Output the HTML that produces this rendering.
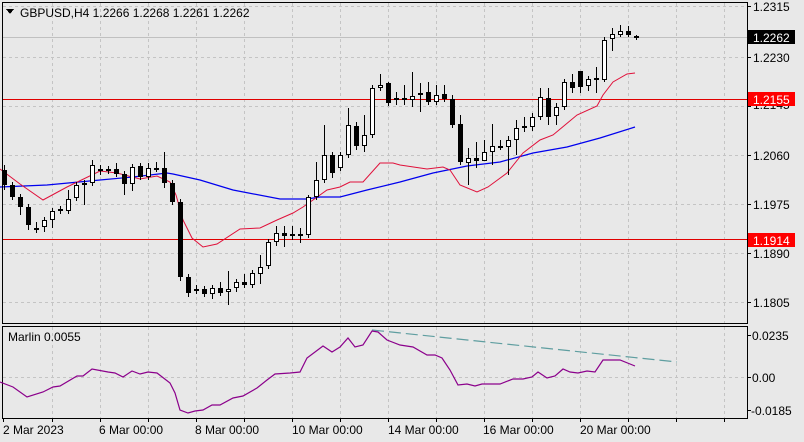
<!DOCTYPE html>
<html><head><meta charset="utf-8">
<style>
html,body{margin:0;padding:0;background:#e8e8e8;width:804px;height:442px;overflow:hidden}
svg{display:block}
text{font-family:"Liberation Sans",sans-serif;font-size:12px;fill:#000}
</style></head><body>
<svg id="s" width="804" height="442" viewBox="0 0 804 442" xmlns="http://www.w3.org/2000/svg" shape-rendering="crispEdges">
<rect x="0" y="0" width="804" height="442" fill="#e8e8e8"/>
<g id="grid" stroke="#c4c4c4" stroke-dasharray="3,3" stroke-width="1"></g>
<line x1="2" y1="37.5" x2="747" y2="37.5" stroke="#c0c0c0"/>
<line x1="2" y1="99.5" x2="747" y2="99.5" stroke="#e00000"/>
<line x1="2" y1="239.5" x2="747" y2="239.5" stroke="#e00000"/>
<g shape-rendering="auto" fill="none">
<polyline stroke="#0000ee" stroke-width="1.2" points="0,187 47,185 100,180 133,177 167,173 173,174 200,180 233,190 280,199 307,199 320,197 340,197 367,190 400,182 433,173 467,166 500,162 533,153 567,147 600,138 635,127"/>
<polyline stroke="#e0103a" stroke-width="1" points="0,169 20,184 43,200 67,187 100,171 117,173 140,179 157,176 170,182 176,195 183,220 192,238 203,247 217,244 240,229 260,228 277,220 293,213 303,207 313,200 327,190 340,187 350,182 363,182 380,163 393,163 400,165 427,169 443,167 450,170 460,185 477,192 488,187 507,173 523,153 540,140 553,135 577,115 597,106 603,95 613,82 627,74 635,73"/>
</g>
<g id="candles"></g>
<rect x="2.5" y="2.5" width="745" height="321" fill="none" stroke="#000"/>
<rect x="2.5" y="326.5" width="745" height="92" fill="none" stroke="#000"/>
<line x1="3" y1="377.5" x2="747" y2="377.5" stroke="#c4c4c4" stroke-dasharray="3,3"/>
<g shape-rendering="auto" fill="none">
<line x1="372" y1="330" x2="677" y2="362" stroke="#5f9ea0" stroke-width="1.2" stroke-dasharray="12,5"/>
<polyline stroke="#8b008b" stroke-width="1.2" points="0,382 13,387 27,397 43,392 53,387 60,386 77,376 83,376 92,369 108,372 115,373 123,377 132,371 140,374 148,372 157,373 170,383 175,393 180,410 188,413 195,411 203,410 212,405 220,405 233,398 243,396 257,388 267,380 275,374 290,373 300,372 307,358 323,346 332,352 340,347 348,338 355,347 363,345 372,331 378,332 387,340 400,345 413,347 427,355 435,355 442,358 450,370 458,385 467,384 475,386 482,384 500,384 513,379 523,379 532,377 538,372 547,378 555,376 563,369 570,372 578,373 587,371 595,372 603,360 620,360 635,366"/>
</g>
<polygon points="6,9 14,9 10,14" fill="#000"/>
<text x="20" y="17">GBPUSD,H4  1.2266 1.2268 1.2261 1.2262</text>
<text x="8" y="341">Marlin 0.0055</text>
<g id="ticks" stroke="#000"></g>
<text x="753" y="11">1.2315</text>
<text x="753" y="62">1.2230</text>
<text x="753" y="160">1.2060</text>
<text x="753" y="209">1.1975</text>
<text x="753" y="258">1.1890</text>
<text x="753" y="307">1.1805</text>
<text x="753" y="109">1.2145</text>
<rect x="748" y="30" width="47" height="14" fill="#000"/>
<text x="753" y="42" style="fill:#fff">1.2262</text>
<rect x="748" y="92" width="47" height="14" fill="#ff0000"/>
<text x="753" y="104" style="fill:#fff">1.2155</text>
<rect x="748" y="233" width="47" height="14" fill="#ff0000"/>
<text x="753" y="245" style="fill:#fff">1.1914</text>
<text x="752" y="340">0.0235</text>
<text x="752" y="382">0.00</text>
<text x="751" y="415">-0.0185</text>
<text x="3" y="434">2 Mar 2023</text>
<text x="99" y="434">6 Mar 00:00</text>
<text x="195" y="434">8 Mar 00:00</text>
<text x="292" y="434">10 Mar 00:00</text>
<text x="388" y="434">14 Mar 00:00</text>
<text x="483" y="434">16 Mar 00:00</text>
<text x="580" y="434">20 Mar 00:00</text>
</svg>
<script>
var NS="http://www.w3.org/2000/svg";
function el(p,n,a){var e=document.createElementNS(NS,n);for(var k in a)e.setAttribute(k,a[k]);p.appendChild(e);return e;}
var g=document.getElementById("grid");
[52,100,148,196,244,292,340,388,436,484,532,580,628,676,724].forEach(function(x){
 el(g,"line",{x1:x+.5,y1:3,x2:x+.5,y2:323});
 el(g,"line",{x1:x+.5,y1:327,x2:x+.5,y2:418});
});
[6,57,106,155,204,253,302].forEach(function(y){el(g,"line",{x1:3,y1:y+.5,x2:747,y2:y+.5});});
var t=document.getElementById("ticks");
[6,57,106,155,204,253,302,335,377,410].forEach(function(y){el(t,"line",{x1:747,y1:y+.5,x2:751,y2:y+.5});});
[52,100,148,196,244,292,340,388,436,484,532,580,628,676,724,3].forEach(function(x){el(t,"line",{x1:x+.5,y1:418,x2:x+.5,y2:422});});
var d=[[170,185,165,190],[185,197],[197,207,,215],[207,225,,230],[228,229,222,233],[227,220,,232],[220,211,,228],[211,209],[211,199,190],[198,185],
[184,183,,205],[183,165,160],[171,169,165,175],[171,169],[169,174,163],[174,184,,195],[184,167,164,191],[166,177],[177,168,163],[169,168,162],
[168,183,152,188],[183,202,,205],[202,277,,281],[277,293,,297],[291,289,285],[289,294],[294,288,,299],[288,293,282,296],[292,289,271,305],[288,282,,292],
[282,285,274],[285,273],[274,267,255,284],[266,242,,269],[242,233,226,246],[233,236,226,247],[234,234,226,240],[234,234,228,243],[235,197,195,238],[197,180,162],
[180,155,125],[155,173,152,178],[168,155],[155,125,108],[126,146,122,150],[146,135,115,152],[135,88,85],[88,85,74],[83,103,82],[98,100,92,105],
[98,98,85,105],[100,96,72,107],[93,93,83,112],[92,102,82],[102,95,85,105],[94,99,85,102],[99,125,95],[124,162,115,165],[163,158,148,185],[158,161,142,168],
[161,152,140,157],[152,146,124,165],[146,147,140,150],[147,140,136,175],[140,128,120,155],[128,126,117,132],[127,117,113,131],[117,97,88],[98,117,88,125],[116,107,103,125],
[107,82,,110],[82,88,74,93],[71,87,71,93],[86,79,,91],[80,78,67,93],[80,40,,82],[39,34,28,51],[35,31,25,37],[31,35,26,37],[36,37,35,40]];
var c=document.getElementById("candles");
d.forEach(function(a,i){
 var x=4+8*i,o=a[0],cl=a[1],top=Math.min(o,cl),bot=Math.max(o,cl);
 var h=a[2]!=null?a[2]:top-3,l=a[3]!=null?a[3]:bot+3;
 el(c,"line",{x1:x+.5,y1:h,x2:x+.5,y2:l,stroke:"#000"});
 var bh=Math.max(bot-top,1);
 if(bot-top<=1){el(c,"rect",{x:x-2,y:top,width:5,height:2,fill:"#000"});}
 else if(cl>o){el(c,"rect",{x:x-2,y:top,width:5,height:bh,fill:"#000"});}
 else{el(c,"rect",{x:x-2+.5,y:top+.5,width:4,height:bh-1,fill:"#fff",stroke:"#000"});}
});
</script>
</body></html>
